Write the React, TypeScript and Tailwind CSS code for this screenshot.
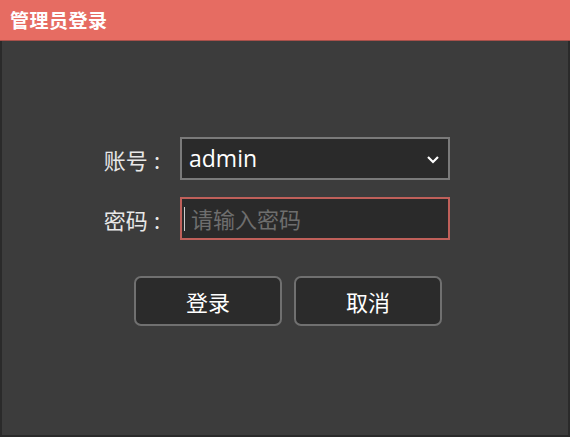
import React from 'react';

const font = { fontFamily: '"Microsoft YaHei", "Noto Sans CJK SC", "Noto Sans", sans-serif' };

const Label = ({ text }: { text: string }) => (
  <span className="text-[#e8e8e8] text-[22px] w-[60px] text-right whitespace-nowrap leading-none">
    {text}
    <span className="ml-[6px]">:</span>
  </span>
);

const App = () => {
  return (
    <div className="w-[570px] h-[437px] flex flex-col bg-[#2a2a2a]" style={font}>
      {/* Title bar */}
      <div className="h-[41px] bg-[#e66c62] border-b border-[#a8504a] flex items-center px-[10px] shrink-0">
        <span className="text-white text-[19px] font-bold tracking-[0.5px]">管理员登录</span>
      </div>

      {/* Body */}
      <div className="flex-1 mx-[2px] mb-[2px] bg-[#3c3c3c] flex flex-col pt-[96px] pl-[98px]">
        <div className="flex flex-col gap-[17px]">
          <div className="flex items-center gap-[20px]">
            <Label text="账号" />
            <div className="w-[270px] h-[43px] border-2 border-[#7a7a7a] bg-[#2a2a2a] flex items-center justify-between pl-[7px] pr-[8px]">
              <span className="text-white text-[23px] leading-none" style={{ fontFamily: '"Open Sans", "Liberation Sans", sans-serif' }}>admin</span>
              <svg width="14" height="10" viewBox="0 0 14 10" fill="none">
                <path d="M2 3 L7 8 L12 3" stroke="#ffffff" strokeWidth="2.2" />
              </svg>
            </div>
          </div>
          <div className="flex items-center gap-[20px]">
            <Label text="密码" />
            <div className="w-[270px] h-[43px] border-2 border-[#c0605a] bg-[#2a2a2a] flex items-center pl-[2px]">
              <span className="w-[1px] h-[24px] bg-[#cccccc] mr-[6px]" />
              <span className="text-[#6e6e6e] text-[22px]">请输入密码</span>
            </div>
          </div>
        </div>

        <div className="flex gap-[12px] mt-[36px] ml-[34px]">
          <button className="w-[148px] h-[50px] rounded-[7px] border-2 border-[#707070] bg-[#2b2b2b] text-white text-[22px]">
            登录
          </button>
          <button className="w-[148px] h-[50px] rounded-[7px] border-2 border-[#707070] bg-[#2b2b2b] text-white text-[22px]">
            取消
          </button>
        </div>
      </div>
    </div>
  );
};

export default App;
